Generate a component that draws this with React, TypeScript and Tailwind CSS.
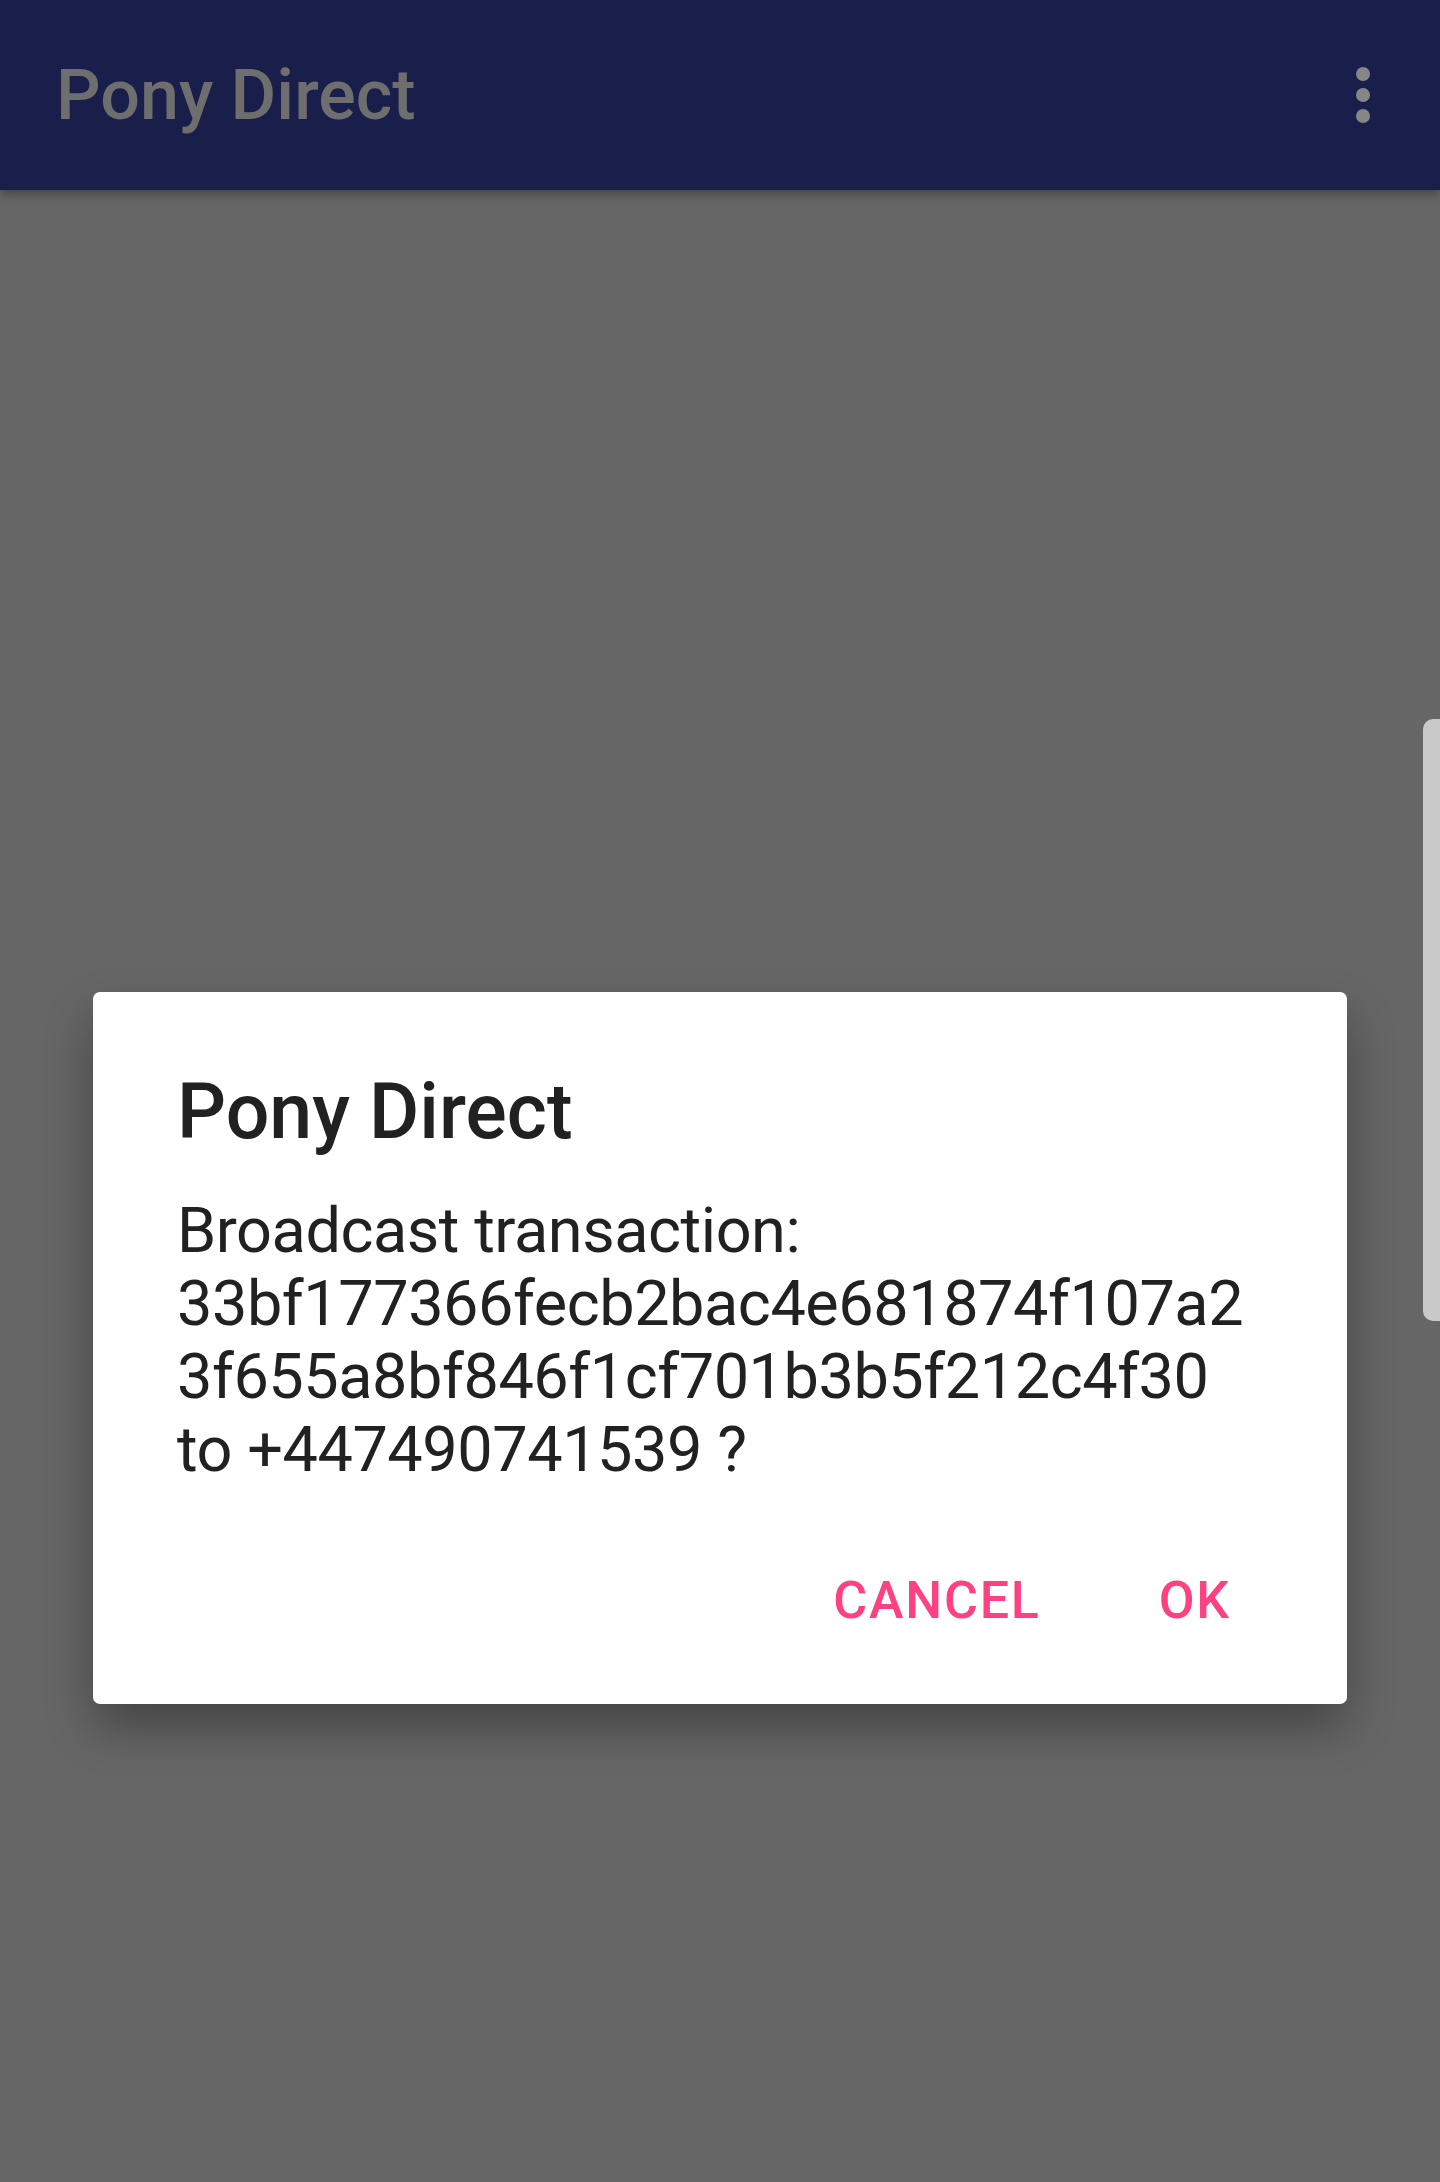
import React from 'react';

// Dimmed app screen behind an AlertDialog
const hashLines = [
    'Broadcast transaction:',
    '33bf177366fecb2bac4e681874f107a2',
    '3f655a8bf846f1cf701b3b5f212c4f30',
    'to +447490741539 ?',
];

export default function App() {
    return (
        <div className="relative w-[1440px] h-[2182px] overflow-hidden bg-[#666666]" style={{ fontFamily: 'Roboto, "Noto Sans", sans-serif' }}>
            {/* toolbar */}
            <header className="relative z-10 h-[190px] bg-[#191f4a] flex items-center justify-between pl-[56px] pr-[70px] shadow-[0_4px_10px_rgba(0,0,0,0.35)]">
                <h1 className="text-[70px] leading-none font-medium text-[#6e6e6e]">Pony Direct</h1>
                <div className="flex flex-col gap-[7px]">
                    <span className="w-[14px] h-[14px] rounded-full bg-[#868686]" />
                    <span className="w-[14px] h-[14px] rounded-full bg-[#868686]" />
                    <span className="w-[14px] h-[14px] rounded-full bg-[#868686]" />
                </div>
            </header>

            {/* edge panel handle */}
            <div className="absolute right-0 top-[719px] w-[17px] h-[602px] rounded-l-[10px] bg-[#c9c9c9]" />

            <main className="pt-[802px]">
                <div className="mx-auto w-[1254px] bg-white rounded-[7px] shadow-[0_24px_48px_rgba(0,0,0,0.32)] pt-[74px] pb-[73px]">
                    <h2 className="pl-[84px] text-[77px] leading-[92px] font-medium text-[#212121]">Pony Direct</h2>
                    <div className="mt-[36px] pl-[84px] text-[63px] leading-[73px] tracking-[-0.45px] text-[#212121]">
                        {hashLines.map((line) => (
                            <div key={line}>{line}</div>
                        ))}
                    </div>
                    <div className="mt-[85px] flex justify-end items-center gap-[118px] pr-[116px]">
                        <button className="text-[52px] leading-[60px] font-medium tracking-[1.8px] text-[#ff4081]">CANCEL</button>
                        <button className="text-[52px] leading-[60px] font-medium tracking-[1.8px] text-[#ff4081]">OK</button>
                    </div>
                </div>
            </main>
        </div>
    );
}
